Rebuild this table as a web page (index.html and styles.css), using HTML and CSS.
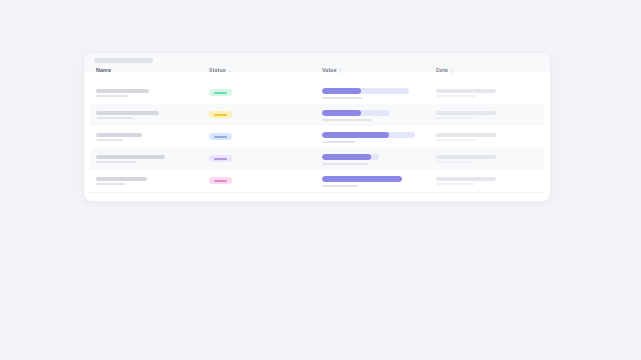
FILE: index.html
```html
<!DOCTYPE html>
<html>
<head>
<meta charset="utf-8">
<link rel="stylesheet" href="styles.css">
</head>
<body>
<div class="page">
  <div class="card">
    <div class="band">
      <div class="title-ph"></div>
      <div class="thead">
        <div class="th th-dark">Name</div>
        <div class="th">Status <span class="sort">↓</span></div>
        <div class="th">Value <span class="sort">↕</span></div>
        <div class="th">Date <span class="sort">↕</span></div>
      </div>
    </div>
    <div class="tbody">
      <div class="row">
        <div class="cell stack"><div class="bar main" style="width:53px"></div><div class="bar sub" style="width:32px"></div></div>
        <div class="cell"><span class="pill green"><i></i></span></div>
        <div class="cell stack value"><div class="track" style="width:87px"><div class="fill" style="width:39px"></div></div><div class="bar vsub" style="width:40px"></div></div>
        <div class="cell stack"><div class="bar dmain"></div><div class="bar dsub" style="width:40px"></div></div>
      </div>
      <div class="row alt">
        <div class="cell stack"><div class="bar main" style="width:63px"></div><div class="bar sub" style="width:37px"></div></div>
        <div class="cell"><span class="pill yellow"><i></i></span></div>
        <div class="cell stack value"><div class="track" style="width:67px"><div class="fill" style="width:39px"></div></div><div class="bar vsub" style="width:50px"></div></div>
        <div class="cell stack"><div class="bar dmain"></div><div class="bar dsub" style="width:37px"></div></div>
      </div>
      <div class="row">
        <div class="cell stack"><div class="bar main" style="width:46px"></div><div class="bar sub" style="width:27px"></div></div>
        <div class="cell"><span class="pill blue"><i></i></span></div>
        <div class="cell stack value"><div class="track" style="width:93px"><div class="fill" style="width:67px"></div></div><div class="bar vsub" style="width:33px"></div></div>
        <div class="cell stack"><div class="bar dmain"></div><div class="bar dsub" style="width:40px"></div></div>
      </div>
      <div class="row alt">
        <div class="cell stack"><div class="bar main" style="width:69px"></div><div class="bar sub" style="width:41px"></div></div>
        <div class="cell"><span class="pill purple"><i></i></span></div>
        <div class="cell stack value"><div class="track" style="width:57px"><div class="fill" style="width:49px"></div></div><div class="bar vsub" style="width:47px"></div></div>
        <div class="cell stack"><div class="bar dmain"></div><div class="bar dsub" style="width:37px"></div></div>
      </div>
      <div class="row">
        <div class="cell stack"><div class="bar main" style="width:51px"></div><div class="bar sub" style="width:30px"></div></div>
        <div class="cell"><span class="pill pink"><i></i></span></div>
        <div class="cell stack value"><div class="track" style="width:80px"><div class="fill" style="width:80px"></div></div><div class="bar vsub" style="width:36px"></div></div>
        <div class="cell stack"><div class="bar dmain"></div><div class="bar dsub" style="width:39px"></div></div>
      </div>
    </div>
  </div>
</div>
</body>
</html>
```
FILE: styles.css
```css
html, body {
  margin: 0;
  padding: 0;
  background: #f1f3f6;
  font-family: Inter, "Noto Sans", "Liberation Sans", sans-serif;
}
.page {
  padding: 53px 0 0 84px;
  height: 360px;
  box-sizing: border-box;
}
.card {
  width: 466px;
  height: 148px;
  box-sizing: border-box;
  background: #ffffff;
  border-radius: 8px;
  box-shadow: 0 0 0 1px #eceef2, 0 2px 6px rgba(30, 40, 70, 0.05);
  overflow: hidden;
  padding-bottom: 8px;
}
.band {
  background: #f8f9fb;
  height: 19px;
  box-sizing: border-box;
  padding: 5px 6px 0;
}
.title-ph {
  width: 59px;
  height: 5px;
  border-radius: 3px;
  background: #dfe3eb;
  margin-left: 4px;
}
.thead, .row {
  display: grid;
  grid-template-columns: 113px 113px 114px 1fr;
}
.thead { margin-top: 4px; }
.th {
  padding-left: 6px;
  font-size: 5.2px;
  line-height: 6px;
  font-weight: 600;
  color: #737a87;
  letter-spacing: 0.1px;
}
.th-dark { color: #4b5563; }
.sort {
  color: #cdd1d8;
  font-weight: 400;
  font-size: 4px;
  margin-left: 1px;
}
.tbody {
  margin: 10px 6px 0;
  border-bottom: 1px solid #f0f1f4;
}
.row { height: 22px; }
.row.alt { background: #f8f9fb; }
.cell {
  padding-left: 6px;
  display: flex;
  align-items: center;
}
.stack {
  flex-direction: column;
  align-items: flex-start;
  justify-content: center;
  gap: 2px;
}
.value { gap: 3px; }
.bar { border-radius: 2px; }
.main { height: 4px; background: #d4d7dd; }
.sub { height: 2px; background: #e3e5ea; }
.dmain { width: 60px; height: 4px; background: #e4e7ec; }
.dsub { height: 2px; background: #eff1f4; }
.vsub { height: 2px; background: #e2e4ea; }
.track {
  height: 6px;
  border-radius: 3px;
  background: #e3e6fb;
  overflow: hidden;
}
.fill {
  height: 6px;
  border-radius: 3px;
  background: #8d87e6;
}
.pill {
  width: 23px;
  height: 7px;
  border-radius: 4px;
  display: flex;
  align-items: center;
  justify-content: center;
  margin-top: -1px;
}
.pill i {
  display: block;
  width: 13px;
  height: 2px;
  border-radius: 1px;
}
.green { background: #d3f7e5; }
.green i { background: #6fdcaa; }
.yellow { background: #fdf1b6; }
.yellow i { background: #f0c53a; }
.blue { background: #d9e6fb; }
.blue i { background: #8cadea; }
.purple { background: #ede6fb; }
.purple i { background: #b29ae8; }
.pink { background: #fbd9f0; }
.pink i { background: #e48ac9; }
```
